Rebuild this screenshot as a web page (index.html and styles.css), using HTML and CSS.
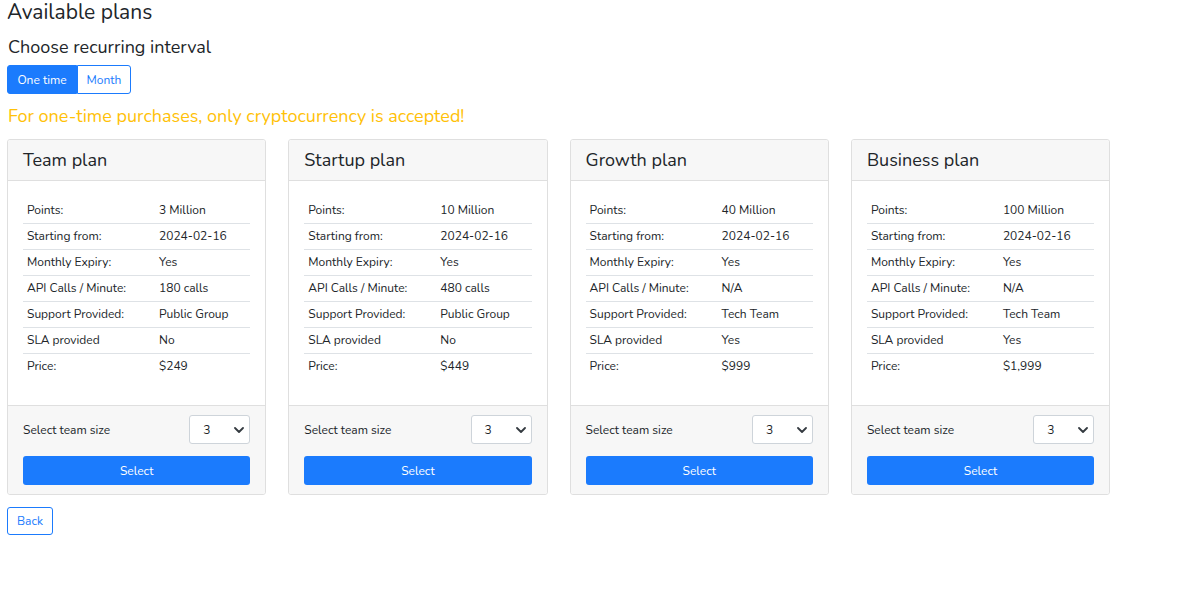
FILE: index.html
```html
<!DOCTYPE html>
<html lang="en">
<head>
<meta charset="utf-8">
<title>Available plans</title>
<link rel="stylesheet" href="styles.css">
</head>
<body>
<div class="page">
  <h3 class="title">Available plans</h3>
  <h5 class="subtitle">Choose recurring interval</h5>
  <div class="btn-group">
    <button class="btn btn-active">One time</button>
    <button class="btn btn-outline">Month</button>
  </div>
  <p class="warning">For one-time purchases, only cryptocurrency is accepted!</p>

  <div class="plans">
    <div class="card">
      <div class="card-header">Team plan</div>
      <div class="card-body">
        <table class="info">
          <tr><td>Points:</td><td>3 Million</td></tr>
          <tr><td>Starting from:</td><td>2024-02-16</td></tr>
          <tr><td>Monthly Expiry:</td><td>Yes</td></tr>
          <tr><td>API Calls / Minute:</td><td>180 calls</td></tr>
          <tr><td>Support Provided:</td><td>Public Group</td></tr>
          <tr><td>SLA provided</td><td>No</td></tr>
          <tr><td>Price:</td><td>$249</td></tr>
        </table>
      </div>
      <div class="card-footer">
        <div class="size-row">
          <span>Select team size</span>
          <div class="select"><span>3</span><svg width="10" height="6" viewBox="0 0 10 6"><path d="M1 1l4 4 4-4" fill="none" stroke="#343a40" stroke-width="1.8" stroke-linecap="round" stroke-linejoin="round"/></svg></div>
        </div>
        <button class="btn-select">Select</button>
      </div>
    </div>

    <div class="card">
      <div class="card-header">Startup plan</div>
      <div class="card-body">
        <table class="info">
          <tr><td>Points:</td><td>10 Million</td></tr>
          <tr><td>Starting from:</td><td>2024-02-16</td></tr>
          <tr><td>Monthly Expiry:</td><td>Yes</td></tr>
          <tr><td>API Calls / Minute:</td><td>480 calls</td></tr>
          <tr><td>Support Provided:</td><td>Public Group</td></tr>
          <tr><td>SLA provided</td><td>No</td></tr>
          <tr><td>Price:</td><td>$449</td></tr>
        </table>
      </div>
      <div class="card-footer">
        <div class="size-row">
          <span>Select team size</span>
          <div class="select"><span>3</span><svg width="10" height="6" viewBox="0 0 10 6"><path d="M1 1l4 4 4-4" fill="none" stroke="#343a40" stroke-width="1.8" stroke-linecap="round" stroke-linejoin="round"/></svg></div>
        </div>
        <button class="btn-select">Select</button>
      </div>
    </div>

    <div class="card">
      <div class="card-header">Growth plan</div>
      <div class="card-body">
        <table class="info">
          <tr><td>Points:</td><td>40 Million</td></tr>
          <tr><td>Starting from:</td><td>2024-02-16</td></tr>
          <tr><td>Monthly Expiry:</td><td>Yes</td></tr>
          <tr><td>API Calls / Minute:</td><td>N/A</td></tr>
          <tr><td>Support Provided:</td><td>Tech Team</td></tr>
          <tr><td>SLA provided</td><td>Yes</td></tr>
          <tr><td>Price:</td><td>$999</td></tr>
        </table>
      </div>
      <div class="card-footer">
        <div class="size-row">
          <span>Select team size</span>
          <div class="select"><span>3</span><svg width="10" height="6" viewBox="0 0 10 6"><path d="M1 1l4 4 4-4" fill="none" stroke="#343a40" stroke-width="1.8" stroke-linecap="round" stroke-linejoin="round"/></svg></div>
        </div>
        <button class="btn-select">Select</button>
      </div>
    </div>

    <div class="card">
      <div class="card-header">Business plan</div>
      <div class="card-body">
        <table class="info">
          <tr><td>Points:</td><td>100 Million</td></tr>
          <tr><td>Starting from:</td><td>2024-02-16</td></tr>
          <tr><td>Monthly Expiry:</td><td>Yes</td></tr>
          <tr><td>API Calls / Minute:</td><td>N/A</td></tr>
          <tr><td>Support Provided:</td><td>Tech Team</td></tr>
          <tr><td>SLA provided</td><td>Yes</td></tr>
          <tr><td>Price:</td><td>$1,999</td></tr>
        </table>
      </div>
      <div class="card-footer">
        <div class="size-row">
          <span>Select team size</span>
          <div class="select"><span>3</span><svg width="10" height="6" viewBox="0 0 10 6"><path d="M1 1l4 4 4-4" fill="none" stroke="#343a40" stroke-width="1.8" stroke-linecap="round" stroke-linejoin="round"/></svg></div>
        </div>
        <button class="btn-select">Select</button>
      </div>
    </div>
  </div>

  <button class="btn-back">Back</button>
</div>
</body>
</html>
```

FILE: styles.css
```css
* { box-sizing: border-box; }

html, body {
  margin: 0;
  padding: 0;
  background: #fff;
}

body {
  font-family: "Nunito", "Lato", "Noto Sans", sans-serif;
  color: #212529;
  font-size: 12px;
}

.page {
  padding: 0 7px;
  width: 1120px;
}

.title {
  margin: 0;
  font-size: 21px;
  font-weight: 400;
  line-height: 25px;
}

.subtitle {
  margin: 12px 0 0 1px;
  font-size: 18px;
  font-weight: 400;
  line-height: 20px;
}

.btn-group {
  display: flex;
  margin-top: 8px;
}

.btn {
  height: 29px;
  font-family: inherit;
  font-size: 12px;
  padding: 0;
  border: 1px solid #1b7bfd;
  white-space: nowrap;
  cursor: pointer;
}

.btn-active {
  background: #1b7bfd;
  color: #fff;
  border-radius: 3px 0 0 3px;
  width: 70px;
}

.btn-outline {
  background: #fff;
  color: #1b7bfd;
  border-radius: 0 3px 3px 0;
  width: 54px;
}

.warning {
  margin: 11px 0 0 1px;
  font-size: 18px;
  line-height: 22px;
  color: #ffc107;
}

.plans {
  display: grid;
  grid-template-columns: repeat(4, 259.3px);
  column-gap: 22px;
  margin-top: 12px;
}

.card {
  border: 1px solid #dfdfdf;
  border-radius: 3px;
  background: #fff;
  display: flex;
  flex-direction: column;
}

.card-header {
  height: 41px;
  background: #f7f7f7;
  border-bottom: 1px solid #dfdfdf;
  padding: 0 15px 1px;
  display: flex;
  align-items: center;
  font-size: 18px;
  border-radius: 3px 3px 0 0;
}

.card-body {
  padding: 16px 15px 26px;
}

.info {
  width: 100%;
  border-collapse: collapse;
}

.info td {
  height: 26px;
  padding: 0 4px;
  font-size: 12px;
  vertical-align: middle;
}

.info td:first-child {
  width: 132px;
}

.info tr + tr td {
  border-top: 1px solid #dee2e6;
}

.card-footer {
  background: #f7f7f7;
  border-top: 1px solid #dfdfdf;
  padding: 9px 15px 9px;
  border-radius: 0 0 3px 3px;
}

.size-row {
  display: flex;
  align-items: center;
  justify-content: space-between;
}

.select {
  width: 61px;
  height: 29px;
  border: 1px solid #ced4da;
  border-radius: 3px;
  background: #fff;
  display: flex;
  align-items: center;
  justify-content: space-between;
  padding: 0 5px 0 13px;
  font-size: 12px;
}

.btn-select {
  display: block;
  width: 100%;
  height: 29px;
  margin-top: 12px;
  border: 0;
  border-radius: 3px;
  background: #1b7bfd;
  color: #fff;
  font-family: inherit;
  font-size: 12px;
  cursor: pointer;
}

.btn-back {
  margin-top: 12px;
  width: 46px;
  height: 28px;
  border: 1px solid #1b7bfd;
  border-radius: 3px;
  background: #fff;
  color: #1b7bfd;
  font-family: inherit;
  font-size: 12px;
  padding: 0;
  cursor: pointer;
}
```
